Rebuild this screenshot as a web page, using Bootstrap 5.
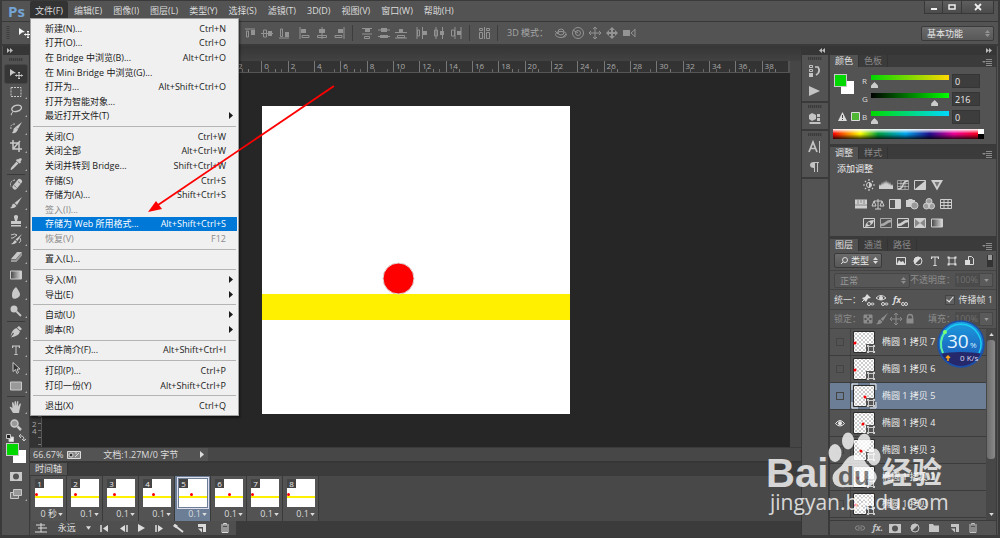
<!DOCTYPE html>
<html lang="zh-CN">
<head>
<meta charset="utf-8">
<meta name="viewport" content="width=device-width, initial-scale=1">
<title>Ps</title>
<link href="https://cdn.jsdelivr.net/npm/bootstrap@5.3.0/dist/css/bootstrap.min.css" rel="stylesheet">
<style>
:root{--panel:#535353;--dark:#3b3b3b;--line:#353535;--txt:#dcdcdc;--dim:#8a8a8a}
body{font:9px/14px "Open Sans","Noto Sans CJK SC",sans-serif;background:var(--panel);color:var(--txt);border:2px solid #3a3a3a;border-top-width:1px;border-bottom-width:3px}
button,input,select{font:inherit;color:inherit;background:none;border:0;padding:0;margin:0;border-radius:0}
svg{display:block;flex:none;fill:none;stroke:currentColor}
.ic{width:14px;height:14px}
.minh0{min-height:0}
/* title bar */
.titlebar{height:21px;padding-left:6px;border-bottom:1px solid #383838}
.logo{width:22px;font:700 15px/20px "Open Sans",sans-serif;color:#73a4d4}
.menus{gap:1px}
.menus>button{padding:0 5px;height:17px;line-height:19px}
.menus>button.open{background:#333;border-radius:2px 2px 0 0}
.winbtns>button{width:19px;height:13px;background:linear-gradient(#5e5e5e,#4c4c4c);border:1px solid #383838;border-top:0;border-left:0;display:flex;align-items:center;justify-content:center}
.winbtns>button:first-child{border-left:1px solid #383838}
.winbtns>button:last-child{width:32px}
/* options bar */
.options{height:24px;border-bottom:2px solid #3a3a3a;color:#939393}
.options .cell{width:17px;display:flex;justify-content:center}
.options .lead-in{width:239px;padding-left:4px}
.rule-v{width:1px;height:16px;background:#3d3d3d;margin:0 5px}
.combo{background:linear-gradient(#6b6b6b,#585858);border:1px solid #3a3a3a;border-radius:2px;color:#e8e8e8;padding:0 5px;appearance:none;line-height:13px;height:15px}
.combo-wrap{position:relative}
.combo-wrap>svg{position:absolute;right:4px;top:4px;pointer-events:none}
/* tool column */
.tools{width:28px;padding-left:1px;border-right:1px solid #3a3a3a;color:#c9c9c9}
.strip-head{height:9px;background:#363636;color:#bbb}
.grip{width:14px;height:3px;margin:3px auto 4px;background:repeating-linear-gradient(90deg,#3b3b3b 0 1px,#4a4a4a 1px 2px)}
.tool{display:flex;align-items:center;justify-content:center;width:22px;height:18px;margin:0 auto;position:relative}
.tool.more::after{content:"";position:absolute;right:0;bottom:2px;border:1px solid;border-color:transparent #aaa #aaa transparent}
.tool.on{background:#363636;border-radius:2px;box-shadow:0 0 0 1px #464646}
.hr-t{height:1px;margin:1px 4px;background:#3a3a3a}
.swap{height:9px;padding:0 3px}
.swatch-pair{position:relative;display:grid;grid-template:7px 6px 7px/7px 6px 7px;width:20px;height:20px}
.swatch-pair>.bgc{grid-area:2/2/4/4;background:#fff}
.swatch-pair>.fgc{grid-area:1/1/3/3;background:#00d800;border:1px solid #c9c9c9;z-index:1}
/* document area */
.doctabs{height:15px;background:linear-gradient(#363636,#424242)}
.ruler-h{height:12px;background:#333;border-bottom:1px solid #555;margin-right:2px;color:#aaa;line-height:9px}
.ruler-h>span{flex:1 1 0;border-left:1px solid #777;padding-left:2px;font-size:8px;background:linear-gradient(90deg,transparent 25%,#666 25% 28%,transparent 28% 50%,#777 50% 53%,transparent 53% 75%,#666 75% 78%,transparent 78%) 0 100%/100% 3px no-repeat}
.ruler-h>i{width:205px}
.ruler-v{width:12px;background:#333;border-right:1px solid #555;color:#aaa;font-size:8px;line-height:7px;padding:347px 0 0 2px;position:relative}
.ruler-v::before{content:"";position:absolute;inset:0 0 0 8px;background:repeating-linear-gradient(#777 0 1px,transparent 1px 7px)}
.pasteboard{background:#262626}
.doc{width:308px;height:308px}
.vscroll{width:11px;background:#464646}
.status{height:14px;background:#474747;border-top:1px solid #3a3a3a}
.status>div{width:178px;background:#535353;padding-left:3px}
/* timeline */
.tabs{height:12px;background:var(--dark);color:var(--dim);line-height:12px}
.tabs>button{padding:0 5px;border-right:1px solid #333;line-height:12px}
.tabs>button.on{background:var(--panel);color:#e0e0e0}
.timeline .tabs{height:14px;border-top:2px solid #363636}
.frames{height:46px;background:#484848;gap:1px;border-top:1px solid #3a3a3a;padding-left:1px}
.frame{width:35px;background:#535353;padding:3px 3px 0;text-align:right;box-shadow:1px 0 #3a3a3a}
.frame.on{background:#6b7e96}
.frame .pic{position:relative;width:28px;height:28px;margin-left:1px;background:linear-gradient(#fff 17px,#fff000 17px 19px,#fff 19px)}
.frame.on .pic{outline:1px solid #dde;outline-offset:1px}
.frame .num{position:absolute;left:0;top:0;width:9px;height:9px;line-height:9px;text-align:center;background:#444;color:#eee;font-size:8px}
.frame .dot{position:absolute;top:14px;width:3px;height:3px;border-radius:50%;background:red}
.frame .dur{display:flex;align-items:center;justify-content:flex-end;gap:1px;line-height:12px;padding-top:1px}
.controls{height:14px;background:var(--dark)}
.controls>div{width:206px;background:#4f4f4f;padding-left:4px}
/* dock */
.dock{width:196px;border-left:1px solid #363636;border-right:1px solid #3c3c3c;margin-right:1px}
.iconstrip{width:28px;color:#c4c4c4;border-right:2px solid #3a3a3a}
.iconstrip>div{border-bottom:2px solid #3a3a3a}
.iconstrip .grip{margin:0 auto 1px}
.iconstrip>div{padding-top:2px}
.iconstrip .tool{height:20px}
.panels{min-width:0}
.panel{border-bottom:3px solid #3a3a3a}
.adj-title{padding:3px 0 0 7px;line-height:13px;color:#eee}
.color-body{height:77px;padding:7px 3px 0 4px}
.rgb{line-height:14px;height:18px}
.rgb>label{width:9px;font-size:8px}
.rgb>input[type=range]{appearance:none;width:78px;height:14px;background:no-repeat 0 1px/100% 5px}
.rgb>input[type=range]::-webkit-slider-thumb{appearance:none;width:7px;height:6px;margin-top:8px;background:#ccc;clip-path:polygon(50% 0,100% 60%,100% 100%,0 100%,0 60%)}
.rgb>.val{width:28px;height:14px;background:#3d3d3d;border:1px solid #353535;padding-left:2px;margin-left:3px;line-height:12px;color:#eee}
.r-track{background-image:linear-gradient(90deg,#00d800,#ffd800)!important}
.g-track{background-image:linear-gradient(90deg,#000,#0f0)!important}
.b-track{background-image:linear-gradient(90deg,#00d800,#00d8ff)!important}
.spectrum{height:10px;margin:1px 9px 0 -1px;background:linear-gradient(#fff,transparent 45%,transparent 50%,#000c),linear-gradient(90deg,red,#ff0 18%,#00a040 30%,#00a8f0 48%,#201090 64%,#f0009a 80%,red)}
.spectrum>i{display:block;width:6px;height:10px;background:linear-gradient(#fff 5px,#000 5px)}
.adjrow{gap:3px;height:19px;color:#cfcfcf}
.adj-body{height:77px}
.lrow{padding:0 3px 0 4px;border-bottom:1px solid #434343;height:20px}
.lrow.dis{height:19px}
.dis{color:#8c8c8c}
.combo.dis{background:#575757;color:#999;border-color:#454545}
.pct{width:24px;height:14px;background:#4b4b4b;color:#707070;text-align:right;padding-right:2px}
.drop{width:14px;height:14px;background:#5a5a5a;border:1px solid #474747;color:#999}
.check{appearance:none;width:10px;height:10px;background:#606060;border:1px solid #444;display:block;position:relative}
.check:checked::after{content:"";position:absolute;left:2px;top:-1px;width:4px;height:7px;border:solid #eee;border-width:0 1px 1px 0;transform:rotate(40deg)}
.layers{overflow:hidden}
.layer{height:27px;flex:none;border-bottom:1px solid #3c3c3c;color:#eee}
.layer.on{background:#6b7e96}
.layer .eye{width:21px;height:100%;border-right:1px solid #424242;display:flex;align-items:center;justify-content:center}
.layer .off{width:8px;height:8px;border:1px solid #444;display:block}
.layer .thumb{width:22px;height:22px;margin:0 7px 0 2px;overflow:visible}
.lscroll{width:10px;background:#474747;color:#ddd}
.lscroll .bar{height:119px;width:8px;border-radius:3px;background:linear-gradient(90deg,#6c6c6c,#8a8a8a);margin:0 auto}
.lfoot{height:15px;border-top:1px solid #3a3a3a;padding:0 16px 0 23px;color:#c4c4c4}
/* drop-down menu */
.filemenu{position:absolute;left:28px;top:17px;width:209px;height:398px;background:#f0f0f0;color:#1b1b1b;border:1px solid #a0a0a0;box-shadow:1px 2px 2px #0008;padding:2px 1px;z-index:5}
.filemenu>button{flex:1 1 0;min-height:0;display:flex;align-items:center;justify-content:space-between;padding:0 11px 0 13px;text-align:left;line-height:13px}
.filemenu>button.on{background:#0078d7;color:#fff}
.filemenu>button:disabled{color:#8b8b8b}
.filemenu>hr{margin:3px 1px 2px;border:0;height:1px;flex:none;background:#b5b5b5;opacity:1}
.filemenu>button>svg{margin-right:-7px}
.arrow{position:absolute;left:146px;top:84px;z-index:6;pointer-events:none}
/* speed ball */
.ball{position:absolute;right:13px;top:319px;width:48px;height:48px;z-index:6}
/* watermark */
.wmark{position:absolute;right:46px;bottom:18px;width:184px;height:92px;z-index:6;pointer-events:none;opacity:.78}
</style>
</head>
<body class="vh-100 overflow-hidden d-flex flex-column position-relative">
<svg width="0" height="0" class="position-absolute" aria-hidden="true">
<defs>
<pattern id="chk" width="4" height="4" patternUnits="userSpaceOnUse"><path stroke="none" fill="#fff" d="M0 0h4v4H0z"/><path stroke="none" fill="#ccc" d="M0 0h2v2H0zM2 2h2v2H2z"/></pattern>
<linearGradient id="gr"><stop stop-color="#444"/><stop offset="1" stop-color="#ddd"/></linearGradient>
<symbol id="move" viewBox="0 0 14 14"><path stroke="none" fill="currentColor" d="M1 2l6 4-3 .6L1 9z"/><path d="M10 5v7M6.500 8.500h7M9 6l1-1 1 1M9 11l1 1 1-1M7.500 7.500l-1 1 1 1M12.500 7.500l1 1-1 1"/></symbol>
<symbol id="marq" viewBox="0 0 14 14"><path stroke-dasharray="2 1" d="M2 2.500h10v9H2z"/></symbol>
<symbol id="lasso" viewBox="0 0 14 14"><ellipse cx="7.500" cy="5.500" rx="5" ry="3" transform="rotate(-15 7 5)" stroke-width="1.300"/><path d="M3 7q2 1 0 3t0 2"/></symbol>
<symbol id="qsel" viewBox="0 0 14 14"><path stroke="none" fill="currentColor" d="M13 1L9 8 6.500 6zM6.500 6L9 8.500Q7 13 3 12 5 10 4.500 8z"/><path stroke-dasharray="2 1" d="M6 3Q1 3 2 8"/></symbol>
<symbol id="crop" viewBox="0 0 14 14"><path stroke-width="1.500" d="M4 1v9h9M1 4h9v9M4 10l7-8"/></symbol>
<symbol id="drop" viewBox="0 0 14 14"><path stroke="none" fill="currentColor" d="M12.500 1.500q1 1-1 3l.5 1-1.500 1-3.500-3L8 2l1 .5q2-2 3.500-1z"/><path stroke-width="1.300" d="M8 5l-5 5.500-1 2L4 11l5-5"/></symbol>
<symbol id="heal" viewBox="0 0 14 14"><path stroke="currentColor" stroke-width="5" stroke-linecap="round" d="M10.500 3.500L6 9"/><path d="M9 3.500l2.500 2M5 7.500l2.500 2" stroke="#777"/><path stroke-dasharray="2 1" d="M6 2Q0 3 2 9"/></symbol>
<symbol id="brush" viewBox="0 0 14 14"><path stroke="none" fill="currentColor" d="M13 1L8 9 5.500 7zM5 7.500L7.500 10Q5 13 1 12q2-1 2-2.500t2-2z"/></symbol>
<symbol id="stamp" viewBox="0 0 14 14"><path stroke="none" fill="currentColor" d="M7 1q2.500 0 2 2.500L8 7h4v3H2V7h4L5 3.500Q4.500 1 7 1zM2 11h10v1.500H2z"/></symbol>
<symbol id="hist" viewBox="0 0 14 14"><path stroke="none" fill="currentColor" d="M13 2L8.500 9 6.500 7.500zM6 8l2 2Q5 13 2 12q2-1 4-4z"/><path d="M2 3q4-2 6 0l-4 3H2M10 11q3-2 1-5"/></symbol>
<symbol id="erase" viewBox="0 0 14 14"><path stroke="none" fill="currentColor" d="M8 2h5L7 9H2z"/><path stroke="none" fill="#999" d="M2 9.500h5l6-7v3L7.500 12H2z"/></symbol>
<symbol id="grad" viewBox="0 0 14 14"><path fill="url(#gr)" d="M1.500 3h11v8h-11z"/></symbol>
<symbol id="blur" viewBox="0 0 14 14"><path stroke="none" fill="currentColor" d="M7 1q4 5 4 7.500T7 12.500 3 9t4-8z"/></symbol>
<symbol id="dodge" viewBox="0 0 14 14"><circle cx="5" cy="5" r="3.500" stroke="none" fill="currentColor"/><path stroke-width="1.800" d="M7.500 7.500L12 12"/></symbol>
<symbol id="pen" viewBox="0 0 14 14"><path stroke="none" fill="currentColor" d="M10 1l3 3-2 1.500-3-3zM7.500 3l3.500 3.500Q10 11 2 12.500l3-4-1-1-2.500 4Q3 4 7.500 3z"/></symbol>
<symbol id="type" viewBox="0 0 14 14"><path stroke="none" fill="currentColor" d="M3 2.500h8V5h-1L9.500 3.500h-2V11l1.500.5v.5H5v-.5L6.500 11V3.500h-2L4 5H3z"/></symbol>
<symbol id="psel" viewBox="0 0 14 14"><path d="M4 1.500v9l2.500-2 1.500 4 1.500-1L8 8h3z" fill="#333"/></symbol>
<symbol id="rect" viewBox="0 0 14 14"><path fill="#999" d="M1.500 3h11v8h-11z"/></symbol>
<symbol id="hand" viewBox="0 0 14 14"><path stroke="none" fill="currentColor" d="M4 13L1 8q-1-2 1-1l1.500 1L3 3q1-2 1.500 0L5.500 6V2q1-2 1.500 0v4l1-4.500q1.500-1 1.300.5L9 6.500l1.800-3q1.500-.5 1 1L10.500 10 10 13z"/></symbol>
<symbol id="zoomi" viewBox="0 0 14 14"><circle cx="5.500" cy="5.500" r="3.500" fill="#999" stroke-width="1.500"/><path stroke-width="2.500" d="M8.500 8.500L12 12"/></symbol>
<symbol id="mask" viewBox="0 0 14 14"><path fill="currentColor" stroke="none" fill-rule="evenodd" d="M1 3h12v9H1zm6 1.500a3 3 0 100 6 3 3 0 000-6z"/></symbol>
<symbol id="screen" viewBox="0 0 14 14"><path fill="#777" d="M1.500 5.500h8v6h-8z"/><path fill="#999" d="M4.500 2.500h8v6h-8z"/></symbol>
<symbol id="al1" viewBox="0 0 14 14"><path d="M2 3h10M3.500 5h2v6h-2z"/><path fill="currentColor" stroke="none" d="M8 4h4v5H8z"/></symbol>
<symbol id="al2" viewBox="0 0 14 14"><path d="M1 7.500h12M3.500 4v7h3V4z"/><path fill="currentColor" stroke="none" d="M8 5h4v5H8z"/></symbol>
<symbol id="al3" viewBox="0 0 14 14"><path d="M2 12h10M3.500 3v7.500h2V3z"/><path fill="currentColor" stroke="none" d="M8 6h4v5H8z"/></symbol>
<symbol id="di1" viewBox="0 0 14 14"><path d="M2 2.500h10M2 8h10M4.500 10.500h5v2h-5z"/><path fill="currentColor" stroke="none" d="M5 3h5v3H5z"/></symbol>
<symbol id="arr" viewBox="0 0 14 14"><path d="M2.500 2.500h3v2h-3zM2.500 6.500h3v6h-3zM9.500 2.500h3v2h-3zM9.500 6.500h3v6h-3zM7.500 1v12"/></symbol>
<symbol id="orb" viewBox="0 0 14 14"><ellipse cx="7" cy="8.500" rx="5.500" ry="3"/><circle cx="7" cy="6" r="3"/><path d="M1 5l3 3M9 11l3-3"/></symbol>
<symbol id="roll" viewBox="0 0 14 14"><circle cx="7" cy="7" r="5.500"/><circle cx="7" cy="7" r="2.500"/><path d="M7 7l-5-3"/></symbol>
<symbol id="pan" viewBox="0 0 14 14"><path d="M7 1v12M1 7h12M5 3l2-2 2 2M5 11l2 2 2-2M3 5L1 7l2 2M11 5l2 2-2 2"/></symbol>
<symbol id="cam" viewBox="0 0 14 14"><path stroke="none" fill="currentColor" d="M1 4h7v6H1z"/><path d="M13 3.500L9 7l4 3.500M13 3v8"/></symbol>
<symbol id="dn" viewBox="0 0 6 4"><path stroke="none" fill="currentColor" d="M0 0h6L3 4z"/></symbol>
<symbol id="ud" viewBox="0 0 5 7"><path stroke="none" fill="currentColor" d="M0 3l2.500-3L5 3zM0 4h5L2.500 7z"/></symbol>
<symbol id="rt" viewBox="0 0 4 7"><path stroke="none" fill="currentColor" d="M0 0l4 3.500L0 7z"/></symbol>
<symbol id="ff" viewBox="0 0 6 5"><path stroke="none" fill="currentColor" d="M0 0l3 2.500L0 5zM3 0l3 2.500L3 5z"/></symbol>
<symbol id="flyout" viewBox="0 0 10 7"><path stroke="none" fill="currentColor" d="M0 2h4L2 4z"/><path d="M4 .5h6M4 2.500h6M4 4.500h6M4 6.500h6"/></symbol>
<symbol id="ab" viewBox="0 0 14 14"><path d="M1.500 2.500h11v9h-11z"/><path stroke="none" fill="currentColor" d="M1.500 11.500l11-9v9z"/></symbol>
<symbol id="half" viewBox="0 0 14 14"><circle cx="7" cy="7" r="4"/><path stroke="none" fill="currentColor" d="M4 10A4 4 0 0110 4z"/></symbol>
<symbol id="newp" viewBox="0 0 14 14"><path stroke="none" fill="currentColor" d="M4 3h8v8H9V6H4z"/><path stroke="none" fill="currentColor" d="M4 7.500h4v4z"/></symbol>
<symbol id="trash" viewBox="0 0 14 14"><path d="M3 4h8M5.500 3.500v-1h3v1M4 5v6.500h6V5M6 6v5M8 6v5"/></symbol>
<symbol id="sun" viewBox="0 0 14 14"><circle cx="7" cy="7" r="2.500"/><path stroke="none" fill="currentColor" d="M7 4.500a2.500 2.500 0 010 5z"/><path d="M7 1v2M7 11v2M1 7h2M11 7h2M3 3l1 1M10 10l1 1M3 11l1-1M10 4l1-1" stroke-width="1.200"/></symbol>
<symbol id="lev" viewBox="0 0 14 14"><path stroke="none" fill="currentColor" d="M0 11V8l1-2 1 2 1-4 1 3 1-4 1 3 1-4 1 4 1-3 1 4 1-3 1 4 1-2 1 2v3z"/></symbol>
<symbol id="curv" viewBox="0 0 14 14"><path d="M1.500 2.500h11v9h-11zM5 2.500v9M9 2.500v9M1.500 5.500h11M1.500 8.500h11" stroke-opacity=".6"/><path d="M2 11q4 0 5-4t5-4" stroke-width="1.300"/></symbol>
<symbol id="vib" viewBox="0 0 14 14"><path stroke="none" fill="currentColor" d="M1 2h12L7 12.500z"/><path stroke="none" fill="#777" d="M4.500 4h5L7 9z"/></symbol>
<symbol id="hue" viewBox="0 0 14 14"><path stroke="none" fill="currentColor" d="M1 2.500h12v9H1z"/><path stroke="#888" d="M1 8h12M4 2.500V7M7 2.500V6M10 2.500V7"/></symbol>
<symbol id="bal" viewBox="0 0 14 14"><path d="M7 2v10M4 12h6M3 4h8M3 4L1 9h4L3 4M11 4L9 9h4l-2-5"/></symbol>
<symbol id="bw" viewBox="0 0 14 14"><path d="M1.500 2.500h11v9h-11z"/><path stroke="none" fill="currentColor" d="M7 3h5v8H7z"/></symbol>
<symbol id="photo" viewBox="0 0 14 14"><path stroke="none" fill="currentColor" d="M1 3h2l1-1h3l1 1h2v7H1z"/><circle cx="9.500" cy="8.500" r="3.500" fill="#999"/></symbol>
<symbol id="mix" viewBox="0 0 14 14"><g fill="currentColor" fill-opacity=".6"><circle cx="7" cy="4.500" r="3"/><circle cx="4.500" cy="9" r="3"/><circle cx="9.500" cy="9" r="3"/></g></symbol>
<symbol id="gridi" viewBox="0 0 14 14"><path d="M1.500 2.500h11v9h-11zM5 2.500v9M9 2.500v9M1.500 5.500h11M1.500 8.500h11"/></symbol>
<symbol id="inv" viewBox="0 0 14 14"><path d="M1.500 2.500h11v9h-11z"/><path stroke="none" fill="currentColor" d="M3 11q1-7 9-7-1 6-9 7z"/><circle cx="7" cy="7.500" r="1.500" fill="#555" stroke="none"/></symbol>
<symbol id="post" viewBox="0 0 14 14"><path d="M1.500 2.500h11v9h-11z"/><path stroke-width="2.500" d="M2 9q3 0 5-2t5-2"/></symbol>
<symbol id="selc" viewBox="0 0 14 14"><path fill="#888" d="M1.500 2.500h11v9h-11z"/><path stroke="none" fill="currentColor" d="M2 3h10L7 7zM2 11h10L7 7z"/></symbol>
<symbol id="shape" viewBox="0 0 14 14"><path d="M4 3v8M10 3v8M3 4h8M3 10h8"/><path stroke="none" fill="currentColor" d="M2.500 2.500h2v2h-2zM9.500 2.500h2v2h-2zM2.500 9.500h2v2h-2zM9.500 9.500h2v2h-2z"/></symbol>
<symbol id="img" viewBox="0 0 14 14"><path d="M2.500 3.500h9v7h-9z"/><path stroke="none" fill="currentColor" d="M3 10l2-4 2 2 2-1 2 3z"/></symbol>
<symbol id="smart" viewBox="0 0 14 14"><path d="M6.500 6V2.500h3l2 2v6H8"/><path stroke="none" fill="currentColor" d="M3 6h5v5H3z"/></symbol>
<symbol id="eye" viewBox="0 0 14 14"><path d="M2.500 7.500q4.500-6 9 0-4.500 5-9 0z"/><circle cx="7" cy="7.300" r="1.500" fill="currentColor"/></symbol>
<symbol id="link" viewBox="0 0 14 14"><path d="M6.500 9h-2a2 2 0 010-4h2M7.500 5h2a2 2 0 010 4h-2M5 7h4"/></symbol>
<symbol id="lock" viewBox="0 0 14 14"><path d="M4.500 7V5q0-2.500 2.500-2.500T9.500 5v2" stroke-width="1.300"/><path stroke="none" fill="currentColor" d="M3.500 6.500h7v5h-7z"/></symbol>
<symbol id="checker" viewBox="0 0 14 14"><path d="M3 3h8v8H3z"/><path stroke="none" fill="currentColor" d="M3 3h3v3H3zM8 3h3v3H8zM5.500 5.500h3v3h-3zM3 8h3v3H3zM8 8h3v3H8z"/></symbol>
<symbol id="folder" viewBox="0 0 14 14"><path stroke="none" fill="currentColor" d="M2 3h4l1 1.500h5V11H2z"/></symbol>
<symbol id="badge-s" viewBox="0 0 10 10"><path fill="#535353" stroke="none" d="M0 0h10v10H0z"/><path d="M2.500 2.500h5v5h-5z" stroke="#ccc"/><path stroke="none" fill="#ccc" d="M1 1h2v2H1zM7 1h2v2H7zM1 7h2v2H1zM7 7h2v2H7z"/></symbol>
<symbol id="lt" viewBox="0 0 22 22"><path d="M.5.5h21v21H.5z" fill="url(#chk)" stroke="#2e2e2e"/><use href="#badge-s" x="13" y="13" width="10" height="10"/></symbol>
</defs>
</svg>

<header class="titlebar d-flex align-items-start flex-shrink-0">
<div class="logo">Ps</div>
<nav class="menus d-flex align-items-center">
<button class="open">文件(F)</button><button>编辑(E)</button><button>图像(I)</button><button>图层(L)</button><button>类型(Y)</button><button>选择(S)</button><button>滤镜(T)</button><button>3D(D)</button><button>视图(V)</button><button>窗口(W)</button><button>帮助(H)</button>
</nav>
<div class="winbtns d-flex ms-auto me-1">
<button aria-label="最小化"><svg width="8" height="8"><path d="M1 6h6" stroke="#eee" stroke-width="2"/></svg></button>
<button aria-label="最大化"><svg width="8" height="8"><path d="M1 2h6v4H1z" stroke="#eee" stroke-width="1.500"/></svg></button>
<button aria-label="关闭"><svg width="8" height="8"><path d="M1 1l6 6M7 1L1 7" stroke="#eee" stroke-width="1.800"/></svg></button>
</div>
</header>

<div class="options d-flex align-items-center flex-shrink-0">
<div class="lead-in d-flex align-items-center gap-2"><svg width="4" height="14"><path stroke="#3d3d3d" stroke-dasharray="1 1" stroke-width="3" d="M2 0v14"/></svg><svg class="ic text-light"><use href="#move"/></svg></div>
<div class="cell"><svg class="ic"><use href="#al1"/></svg></div><div class="cell"><svg class="ic"><use href="#al2"/></svg></div><div class="cell"><svg class="ic"><use href="#al3"/></svg></div>
<div class="cell ms-1"><svg class="ic" viewBox="0 0 14 14"><path d="M2 1v12M4 9.500h7v2H4z"/><path fill="currentColor" stroke="none" d="M3 3h5v4H3z"/></svg></div><div class="cell"><svg class="ic" viewBox="0 0 14 14"><path d="M7 1v12M2.500 9.500h9v2h-9z"/><path fill="currentColor" stroke="none" d="M4 3h6v4H4z"/></svg></div><div class="cell"><svg class="ic" viewBox="0 0 14 14"><path d="M12 1v12M3 9.500h7v2H3z"/><path fill="currentColor" stroke="none" d="M6 3h5v4H6z"/></svg></div>
<i class="rule-v"></i>
<div class="cell"><svg class="ic"><use href="#di1"/></svg></div><div class="cell"><svg class="ic" viewBox="0 0 14 14"><path d="M1 4h12M1 10.500h12"/><path fill="currentColor" stroke="none" d="M4 2h6v4H4zM3 9h8v3H3z"/></svg></div><div class="cell"><svg class="ic" viewBox="0 0 14 14"><path d="M1 6.500h12M1 12h12M3.500 9.500h7v2h-7z"/><path fill="currentColor" stroke="none" d="M5 3h4v3H5z"/></svg></div>
<div class="cell ms-1"><svg class="ic" viewBox="0 0 14 14"><path d="M2 1v12M7.500 1v12M2.500 4h2v6h-2z"/><path fill="currentColor" stroke="none" d="M8 5h4v4H8z"/></svg></div><div class="cell"><svg class="ic" viewBox="0 0 14 14"><path d="M4 1v12M10.500 1v12M2.500 4h3v6h-3z"/><path fill="currentColor" stroke="none" d="M8 5h4v4H8z"/></svg></div><div class="cell"><svg class="ic" viewBox="0 0 14 14"><path d="M6 1v12M12 1v12M2.500 4h3v6h-3z"/><path fill="currentColor" stroke="none" d="M8 5h4v4H8z"/></svg></div>
<i class="rule-v"></i>
<div class="cell"><svg class="ic"><use href="#arr"/></svg></div>
<i class="rule-v"></i>
<span class="ms-1 pe-1 text-nowrap text-light text-opacity-50">3D 模式：</span>
<div class="cell"><svg class="ic"><use href="#orb"/></svg></div><div class="cell"><svg class="ic"><use href="#roll"/></svg></div><div class="cell"><svg class="ic"><use href="#pan"/></svg></div><div class="cell"><svg class="ic" viewBox="0 0 14 14"><path stroke="none" fill="currentColor" d="M7 1l3 3H8v2h2V4l3 3-3 3V8H8v2h2l-3 3-3-3h2V8H4v2L1 7l3-3v2h2V4H4z"/></svg></div><div class="cell"><svg class="ic"><use href="#cam"/></svg></div>
<div class="combo-wrap ms-auto me-1"><select class="combo" style="width:73px" aria-label="工作区"><option>基本功能</option></select><svg width="5" height="7"><use href="#ud"/></svg></div>
</div>

<main class="d-flex flex-fill minh0">
<aside class="tools flex-shrink-0">
<div class="strip-head d-flex align-items-center ps-1"><svg width="6" height="5"><use href="#ff"/></svg></div>
<div class="grip"></div>
<button class="tool on" aria-label="移动"><svg class="ic"><use href="#move"/></svg></button>
<button class="tool more"><svg class="ic"><use href="#marq"/></svg></button>
<button class="tool more"><svg class="ic"><use href="#lasso"/></svg></button>
<button class="tool more"><svg class="ic"><use href="#qsel"/></svg></button>
<button class="tool more"><svg class="ic"><use href="#crop"/></svg></button>
<button class="tool more"><svg class="ic"><use href="#drop"/></svg></button>
<div class="hr-t"></div>
<button class="tool more"><svg class="ic"><use href="#heal"/></svg></button>
<button class="tool more"><svg class="ic"><use href="#brush"/></svg></button>
<button class="tool more"><svg class="ic"><use href="#stamp"/></svg></button>
<button class="tool more"><svg class="ic"><use href="#hist"/></svg></button>
<button class="tool more"><svg class="ic"><use href="#erase"/></svg></button>
<button class="tool more"><svg class="ic"><use href="#grad"/></svg></button>
<button class="tool more"><svg class="ic"><use href="#blur"/></svg></button>
<button class="tool more"><svg class="ic"><use href="#dodge"/></svg></button>
<div class="hr-t"></div>
<button class="tool more"><svg class="ic"><use href="#pen"/></svg></button>
<button class="tool more"><svg class="ic"><use href="#type"/></svg></button>
<button class="tool more"><svg class="ic"><use href="#psel"/></svg></button>
<button class="tool more"><svg class="ic"><use href="#rect"/></svg></button>
<div class="hr-t"></div>
<button class="tool more"><svg class="ic"><use href="#hand"/></svg></button>
<button class="tool"><svg class="ic"><use href="#zoomi"/></svg></button>
<div class="swap d-flex justify-content-between"><svg width="8" height="8"><path d="M3 3h4.500v4.500H3z" fill="#eee"/><path d="M.5.5h4v4h-4z" fill="#222"/></svg><svg width="8" height="8"><path d="M1 2h3q2 0 2 4M3 0L1 2l2 2M4 5l2 2 2-2"/></svg></div>
<div class="d-flex justify-content-center"><div class="swatch-pair"><i class="bgc"></i><i class="fgc"></i></div></div>
<button class="tool mt-1"><svg class="ic"><use href="#mask"/></svg></button>
<button class="tool more"><svg class="ic"><use href="#screen"/></svg></button>
</aside>

<section class="flex-fill d-flex flex-column" style="min-width:0">
<div class="doctabs flex-shrink-0"></div>
<div class="d-flex flex-fill minh0">
<div class="flex-fill d-flex flex-column" style="min-width:0">
<div class="ruler-h d-flex flex-shrink-0"><i></i><span>2</span><span>0</span><span>2</span><span>4</span><span>6</span><span>8</span><span>10</span><span>12</span><span>14</span><span>16</span><span>18</span><span>20</span><span>22</span><span>24</span><span>26</span><span>28</span><span>30</span><span>32</span><span>34</span><span>36</span><span>38</span></div>
<div class="d-flex flex-fill minh0">
<div class="ruler-v overflow-hidden flex-shrink-0">2<br>4</div>
<div class="pasteboard flex-fill d-flex align-items-center justify-content-center overflow-hidden">
<svg class="doc" viewBox="0 0 308 308" stroke="none"><path stroke="none" fill="#fff" d="M0 0h308v308H0z"/><path stroke="none" fill="#fff000" d="M0 188h308v26H0z"/><circle cx="136.500" cy="172.500" r="15.500" fill="red"/></svg>
</div>
</div>
</div>
<div class="vscroll flex-shrink-0"></div>
</div>
<div class="status flex-shrink-0 d-flex"><div class="d-flex align-items-center">66.67%<svg class="ms-1" width="14" height="8"><path d="M.5.500h13v7H.5z" fill="#888"/><circle cx="4" cy="4" r="2" fill="#333"/><path d="M8 6l4-4M8 2h2"/></svg><span class="flex-fill text-center text-nowrap">文档:1.27M/0 字节</span><svg class="me-1" width="4" height="7"><use href="#rt"/></svg></div></div>
<div class="timeline flex-shrink-0">
<div class="tabs d-flex"><button class="on">时间轴</button></div>
<div class="frames d-flex">
<div class="frame"><div class="pic"><i class="dot" style="left:0px"></i><span class="num">1</span></div><div class="dur">0 秒<svg width="5" height="3"><use href="#dn"/></svg></div></div>
<div class="frame"><div class="pic"><i class="dot" style="left:3px"></i><span class="num">2</span></div><div class="dur">0.1<svg width="5" height="3"><use href="#dn"/></svg></div></div>
<div class="frame"><div class="pic"><i class="dot" style="left:6px"></i><span class="num">3</span></div><div class="dur">0.1<svg width="5" height="3"><use href="#dn"/></svg></div></div>
<div class="frame"><div class="pic"><i class="dot" style="left:9px"></i><span class="num">4</span></div><div class="dur">0.1<svg width="5" height="3"><use href="#dn"/></svg></div></div>
<div class="frame on"><div class="pic"><i class="dot" style="left:11px"></i><span class="num">5</span></div><div class="dur">0.1<svg width="5" height="3"><use href="#dn"/></svg></div></div>
<div class="frame"><div class="pic"><i class="dot" style="left:13px"></i><span class="num">6</span></div><div class="dur">0.1<svg width="5" height="3"><use href="#dn"/></svg></div></div>
<div class="frame"><div class="pic"><i class="dot" style="left:0px"></i><span class="num">7</span></div><div class="dur">0.1<svg width="5" height="3"><use href="#dn"/></svg></div></div>
<div class="frame"><div class="pic"><i class="dot" style="left:0px"></i><span class="num">8</span></div><div class="dur">0.1<svg width="5" height="3"><use href="#dn"/></svg></div></div>
</div>
<div class="controls d-flex"><div class="d-flex align-items-center justify-content-between pe-1">
<svg class="ic" viewBox="0 0 14 14"><path d="M2 4h9M4 7h9M1 11h12M7 2v9"/></svg><span>永远</span><svg width="5" height="4"><use href="#dn"/></svg>
<svg width="9" height="7"><path d="M1 0v7" stroke-width="1.500"/><path stroke="none" fill="currentColor" d="M8 0v7L3 3.500z"/></svg>
<svg width="9" height="7"><path d="M8 0v7" stroke-width="1.500"/><path stroke="none" fill="currentColor" d="M6 0v7L1 3.500z"/></svg>
<svg width="7" height="8"><path stroke="none" fill="currentColor" d="M0 0l7 4-7 4z"/></svg>
<svg width="9" height="7"><path d="M1 0v7" stroke-width="1.500"/><path stroke="none" fill="currentColor" d="M3 0l5 3.500L3 7z"/></svg>
<svg width="11" height="9"><path d="M1 1l9 7" stroke-width="2"/><path d="M1 1l3 2" stroke-width="3"/></svg>
<svg class="ic"><use href="#newp"/></svg><svg class="ic"><use href="#trash"/></svg>
</div></div>
</div>
</section>

<aside class="dock flex-shrink-0 d-flex flex-column">
<div class="strip-head d-flex align-items-center flex-shrink-0"><svg width="6" height="5" style="margin-left:17px;transform:scaleX(-1)"><use href="#ff"/></svg><svg class="ms-auto me-1" width="6" height="5"><use href="#ff"/></svg></div>
<div class="d-flex flex-fill minh0">
<div class="iconstrip flex-shrink-0">
<div><div class="grip"></div>
<button class="tool"><svg class="ic" viewBox="0 0 14 14"><path d="M1.500 1.500h3v2h-3zM1.500 5.500h3v2h-3z"/><path stroke="none" fill="currentColor" d="M1 9h4v4H1z"/><path d="M7 3h3q3 5-2 8" stroke-width="1.700"/></svg></button>
<button class="tool"><svg class="ic" viewBox="0 0 14 14"><path stroke="none" fill="currentColor" d="M1 2l11 5-11 5z"/></svg></button></div>
<div><div class="grip"></div><button class="tool"><svg class="ic" viewBox="0 0 14 14"><path stroke="none" fill="currentColor" d="M4 1l4 2v4L4 9 1 7V3zM9 2h3v3H9zM9 6h3v3H9z"/><path d="M1.500 11h11" stroke-width="2"/></svg></button></div>
<div><div class="grip"></div><button class="tool"><svg class="ic" viewBox="0 0 14 14"><path d="M1 12L5 2l4 10M2.500 8.500h5" stroke-width="1.700"/><path d="M11.500 1v12"/></svg></button>
<button class="tool"><svg class="ic" viewBox="0 0 14 14"><path stroke="none" fill="currentColor" d="M6 2h5v1H6v5Q2 8 2 5t4-3z"/><path d="M6.500 2v10M9.500 2v10"/></svg></button></div>
</div>
<div class="panels flex-fill d-flex flex-column">
<section class="panel flex-shrink-0">
<div class="tabs d-flex"><button class="on">颜色</button><button>色板</button><svg class="ms-auto me-1 mt-1" width="10" height="7"><use href="#flyout"/></svg></div>
<div class="color-body">
<div class="d-flex">
<div class="d-flex flex-column justify-content-between" style="width:28px;height:51px"><div class="swatch-pair"><i class="bgc"></i><i class="fgc"></i></div><div class="d-flex ps-1 gap-1 pb-1"><svg width="9" height="9"><path stroke="none" fill="#ddd" d="M4.500 0L9 9H0z"/><path stroke="#444" d="M4.500 3v3M4.500 7v1"/></svg><svg width="9" height="9"><path fill="#4fb733" d="M.5.500h8v8h-8z"/></svg></div></div>
<div>
<div class="rgb d-flex"><label for="r">R</label><input id="r" class="r-track" type="range" max="255" value="0"><input class="val" aria-label="R" value="0"></div>
<div class="rgb d-flex"><label for="g">G</label><input id="g" class="g-track" type="range" max="255" value="216"><input class="val" aria-label="G" value="216"></div>
<div class="rgb d-flex"><label for="b">B</label><input id="b" class="b-track" type="range" max="255" value="0"><input class="val" aria-label="B" value="0"></div>
</div></div>
<div class="spectrum d-flex justify-content-end"><i></i></div>
</div>
</section>
<section class="panel flex-shrink-0">
<div class="tabs d-flex"><button class="on">调整</button><button>样式</button><svg class="ms-auto me-1 mt-1" width="10" height="7"><use href="#flyout"/></svg></div>
<div class="adj-body"><div class="adj-title">添加调整</div>
<div class="adjrow d-flex justify-content-center align-items-center pe-1 me-3"><svg class="ic"><use href="#sun"/></svg><svg class="ic"><use href="#lev"/></svg><svg class="ic"><use href="#curv"/></svg><svg class="ic"><use href="#ab"/></svg><svg class="ic"><use href="#vib"/></svg></div>
<div class="adjrow d-flex justify-content-center align-items-center pe-1 me-3"><svg class="ic"><use href="#hue"/></svg><svg class="ic"><use href="#bal"/></svg><svg class="ic"><use href="#bw"/></svg><svg class="ic"><use href="#photo"/></svg><svg class="ic"><use href="#mix"/></svg><svg class="ic"><use href="#gridi"/></svg></div>
<div class="adjrow d-flex justify-content-center align-items-center pe-1 me-3"><svg class="ic"><use href="#inv"/></svg><svg class="ic" stroke-opacity=".7"><use href="#post"/></svg><svg class="ic"><use href="#post"/></svg><svg class="ic"><use href="#selc"/></svg><svg class="ic"><use href="#grad"/></svg></div>
</div>
</section>
<section class="flex-fill d-flex flex-column minh0">
<div class="tabs d-flex flex-shrink-0"><button class="on">图层</button><button>通道</button><button>路径</button><svg class="ms-auto me-1 mt-1" width="10" height="7"><use href="#flyout"/></svg></div>
<div class="lrow d-flex align-items-center flex-shrink-0">
<div class="combo-wrap"><select class="combo ps-3" style="width:48px" aria-label="过滤"><option>类型</option></select><svg width="5" height="7"><use href="#ud"/></svg><svg width="8" height="8" style="right:34px"><circle cx="5" cy="3" r="2.500"/><path d="M3 5L1 7"/></svg></div>
<div class="d-flex ms-2 ps-1" style="gap:3px"><svg class="ic"><use href="#img"/></svg><svg class="ic"><use href="#half"/></svg><svg class="ic"><use href="#type"/></svg><svg class="ic"><use href="#shape"/></svg><svg class="ic"><use href="#smart"/></svg></div>
<svg class="ms-auto" width="6" height="12"><path stroke="none" fill="#333" d="M0 0h6v12H0z"/><path stroke="none" fill="#999" d="M1 0h4v5H1z"/></svg>
</div>
<div class="lrow d-flex align-items-center flex-shrink-0 dis">
<div class="combo-wrap"><select class="combo dis" style="width:76px" disabled aria-label="混合模式"><option>正常</option></select><svg width="5" height="7"><use href="#ud"/></svg></div>
<span class="ms-auto text-nowrap">不透明度：</span><span class="pct">100%</span><button class="drop d-flex align-items-center justify-content-center" aria-label="不透明度"><svg width="5" height="3"><use href="#dn"/></svg></button>
</div>
<div class="lrow d-flex align-items-center flex-shrink-0"><span class="text-nowrap">统一：</span>
<svg class="ic" viewBox="0 0 14 14"><path stroke="none" fill="currentColor" d="M6 1l4 4-3 .5L5 9 1 5l3-1z"/><path d="M4 6L1 9M6.500 11a1.500 1.500 0 103 0 1.500 1.500 0 10-3 0M10 11a1.500 1 0 103 0 1.500 1 0 10-3 0"/></svg>
<svg class="ic" viewBox="0 0 14 14"><path d="M1 5q5-5 10 0-5 4-10 0M6.500 11a1.500 1.500 0 103 0 1.500 1.500 0 10-3 0M10 11a1.500 1 0 103 0 1.500 1 0 10-3 0"/><circle cx="6" cy="5" r="1.500" fill="currentColor"/></svg>
<b class="fst-italic ms-1">fx</b><svg width="7" height="4" class="mt-2"><path d="M.5 2a1.500 1.500 0 103 0 1.500 1.500 0 10-3 0M3.500 2a1.500 1.500 0 103 0 1.500 1.500 0 10-3 0"/></svg>
<label class="d-flex align-items-center gap-1 ms-auto text-nowrap"><input class="check" type="checkbox" checked>传播帧 1</label></div>
<div class="lrow d-flex align-items-center flex-shrink-0 dis"><span class="text-nowrap">锁定：</span><svg class="ic"><use href="#checker"/></svg><svg class="ic"><use href="#brush"/></svg><svg class="ic"><use href="#pan"/></svg><svg class="ic"><use href="#lock"/></svg>
<span class="ms-auto text-nowrap">填充：</span><span class="pct">100%</span><button class="drop d-flex align-items-center justify-content-center" aria-label="填充"><svg width="5" height="3"><use href="#dn"/></svg></button></div>
<div class="d-flex flex-fill minh0">
<div class="layers flex-fill d-flex flex-column">
<div class="layer d-flex align-items-center"><span class="eye"><i class="off"></i></span><svg class="thumb"><use href="#lt"/><circle cx="2" cy="12" r="1.500" fill="red" stroke="none"/></svg>椭圆 1 拷贝 7</div>
<div class="layer d-flex align-items-center"><span class="eye"><i class="off"></i></span><svg class="thumb"><use href="#lt"/><circle cx="2" cy="12" r="1.500" fill="red" stroke="none"/></svg>椭圆 1 拷贝 6</div>
<div class="layer on d-flex align-items-center"><span class="eye"><i class="off"></i></span><svg class="thumb"><use href="#lt"/><circle cx="12" cy="12" r="1.500" fill="red" stroke="none"/><path d="M-1 5v-6h6M17-1h6v6M-1 17v6h6M17 23h6v-6" stroke="#eee"/></svg>椭圆 1 拷贝 5</div>
<div class="layer d-flex align-items-center"><span class="eye"><svg class="ic"><use href="#eye"/></svg></span><svg class="thumb"><use href="#lt"/><circle cx="10" cy="12" r="1.500" fill="red" stroke="none"/></svg>椭圆 1 拷贝 4</div>
<div class="layer d-flex align-items-center"><span class="eye"><i class="off"></i></span><svg class="thumb"><use href="#lt"/><circle cx="8" cy="12" r="1.500" fill="red" stroke="none"/></svg>椭圆 1 拷贝 3</div>
<div class="layer d-flex align-items-center"><span class="eye"><i class="off"></i></span><svg class="thumb"><use href="#lt"/><circle cx="5" cy="12" r="1.500" fill="red" stroke="none"/></svg>椭圆 1 拷贝 2</div>
<div class="layer d-flex align-items-center"><span class="eye"><i class="off"></i></span><svg class="thumb"><use href="#lt"/><circle cx="3" cy="12" r="1.500" fill="red" stroke="none"/></svg>椭圆 1 拷贝</div>
</div>
<div class="lscroll flex-shrink-0 d-flex flex-column align-items-center pt-1 pb-1"><svg width="5" height="3" style="transform:scaleY(-1)"><use href="#dn"/></svg><div class="bar mt-1"></div><svg class="mt-auto" width="5" height="3"><use href="#dn"/></svg></div>
</div>
<div class="lfoot d-flex align-items-center justify-content-between flex-shrink-0"><svg class="ic dis"><use href="#link"/></svg><b class="fst-italic">fx.</b><svg class="ic"><use href="#mask"/></svg><svg class="ic"><use href="#half"/></svg><svg class="ic"><use href="#folder"/></svg><svg class="ic"><use href="#newp"/></svg><svg class="ic"><use href="#trash"/></svg></div>
</section>
</div>
</div>
</aside>
</main>

<div class="filemenu d-flex flex-column">
<button>新建(N)...<span>Ctrl+N</span></button>
<button>打开(O)...<span>Ctrl+O</span></button>
<button>在 Bridge 中浏览(B)...<span>Alt+Ctrl+O</span></button>
<button>在 Mini Bridge 中浏览(G)...</button>
<button>打开为...<span>Alt+Shift+Ctrl+O</span></button>
<button>打开为智能对象...</button>
<button>最近打开文件(T)<svg width="4" height="7"><use href="#rt"/></svg></button>
<hr>
<button>关闭(C)<span>Ctrl+W</span></button>
<button>关闭全部<span>Alt+Ctrl+W</span></button>
<button>关闭并转到 Bridge...<span>Shift+Ctrl+W</span></button>
<button>存储(S)<span>Ctrl+S</span></button>
<button>存储为(A)...<span>Shift+Ctrl+S</span></button>
<button disabled>签入(I)...</button>
<button class="on">存储为 Web 所用格式...<span>Alt+Shift+Ctrl+S</span></button>
<button disabled>恢复(V)<span>F12</span></button>
<hr>
<button>置入(L)...</button>
<hr>
<button>导入(M)<svg width="4" height="7"><use href="#rt"/></svg></button>
<button>导出(E)<svg width="4" height="7"><use href="#rt"/></svg></button>
<hr>
<button>自动(U)<svg width="4" height="7"><use href="#rt"/></svg></button>
<button>脚本(R)<svg width="4" height="7"><use href="#rt"/></svg></button>
<hr>
<button>文件简介(F)...<span>Alt+Shift+Ctrl+I</span></button>
<hr>
<button>打印(P)...<span>Ctrl+P</span></button>
<button>打印一份(Y)<span>Alt+Shift+Ctrl+P</span></button>
<hr>
<button>退出(X)<span>Ctrl+Q</span></button>
</div>

<svg class="arrow" width="190" height="130"><path d="M186 1L10 120" stroke="red" stroke-width="1.800"/><path stroke="none" fill="red" d="M0 127l8-11 6 8z"/></svg>

<svg class="ball" viewBox="0 0 48 48">
<defs><linearGradient id="bl" x2="0" y2="1"><stop stop-color="#1d9de0"/><stop offset="1" stop-color="#1a4fb0"/></linearGradient><clipPath id="bc"><circle cx="24" cy="24" r="22"/></clipPath></defs>
<circle cx="24" cy="24" r="23" fill="url(#bl)" stroke="#1c4fa8" stroke-width="1.500"/>
<path clip-path="url(#bc)" stroke="none" fill="#25286b" d="M0 34q24-4 48 0v14H0z"/>
<path d="M6 33A20 20 0 1142 33" stroke="#18d0f4" stroke-width="1.500"/>
<path d="M6 33A20 20 0 018 12" stroke="#5ff0a0" stroke-width="2"/><circle cx="8" cy="12" r="2" fill="#7dff70" stroke="none"/>
<text x="10" y="28" font-size="19" fill="#e4f6ff" stroke="none">30</text><text x="33" y="28" font-size="8" fill="#cdeeff" stroke="none">%</text>
<path d="M11 41v-5M9 38l2-2 2 2" stroke="#ffa51c" stroke-width="1.500"/><text x="23" y="41" font-size="8" fill="#dde" stroke="none">0 K/s</text>
</svg>

<svg class="wmark" viewBox="0 0 184 92" fill="#fff">
<text x="-2" y="62" font-family="Liberation Sans" font-weight="700" font-size="40" fill="#fff" stroke="none">Bai</text>
<g fill="#fff" stroke="none"><ellipse cx="67" cy="28" rx="6.500" ry="9"/><ellipse cx="80" cy="16" rx="6" ry="8.500"/><ellipse cx="96" cy="17" rx="6.500" ry="8.500" transform="rotate(10 96 17)"/><ellipse cx="106" cy="32" rx="6.500" ry="8.500"/><path d="M87 30q7 0 11 8 4 4 8 8 5 6 1 11-4 6-12 5H77q-10 1-12-6-2-7 5-12 4-3 7-8 4-6 10-6z"/></g>
<text x="70" y="60" font-family="Liberation Sans" font-weight="700" font-size="26" fill="#666" stroke="none">du</text>
<text x="114" y="58" font-family="Noto Sans CJK SC" font-weight="700" font-size="30" fill="#fff" stroke="none">经验</text>
<text x="2" y="85" font-family="Open Sans" font-size="21" fill="#fff" stroke="none">jingyan.baidu.com</text>
</svg>
<script src="https://cdn.jsdelivr.net/npm/bootstrap@5.3.0/dist/js/bootstrap.bundle.min.js"></script>
</body>
</html>
